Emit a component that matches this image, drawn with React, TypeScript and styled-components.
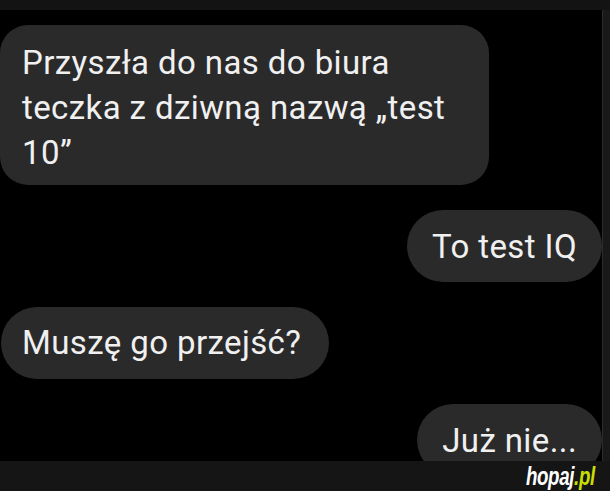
import styled, {createGlobalStyle} from "styled-components";

const GlobalStyle = createGlobalStyle`
  html, body {
    margin: 0;
    padding: 0;
    background: #000;
  }
  body {
    font-family: Roboto, "Liberation Sans", Arial, sans-serif;
  }
`;

const Screen = styled.div`
  width: 610px;
  height: 491px;
  display: flex;
  flex-direction: column;
  background: #000;
  overflow: hidden;
`;

const Chat = styled.div`
  height: 461px;
  display: flex;
  box-sizing: border-box;
  border-top: 10px solid #131313;
  overflow: hidden;
`;

const Messages = styled.div`
  flex: 1;
  display: flex;
  flex-direction: column;
  gap: 25px;
  padding: 15px 0 0 0;
`;

const RightEdge = styled.div`
  width: 7px;
  background: #191919;
  border-left: 1px solid #2c2c2c;
`;

const Bubble = styled.div<{$side: "left" | "right"; $wide?: boolean}>`
  align-self: ${(p) => (p.$side === "left" ? "flex-start" : "flex-end")};
  box-sizing: border-box;
  background: #2a2a2a;
  color: #f0f0f0;
  font-size: 33px;
  line-height: 45px;
  letter-spacing: 0.4px;
  white-space: ${(p) => (p.$wide ? "normal" : "nowrap")};
  width: ${(p) => (p.$wide ? "489px" : "auto")};
  padding: ${(p) => (p.$wide ? "15px 24px 10px 22px" : p.$side === "left" ? "13px 28px 14px 21px" : "14px 25px 13px 25px")};
  border-radius: ${(p) => (p.$wide ? "28px" : "36px")};
  margin-left: ${(p) => (p.$side === "left" && !p.$wide ? "1px" : "0")};
`;

const Footer = styled.div`
  height: 30px;
  display: flex;
  align-items: center;
  justify-content: flex-end;
  padding-right: 15px;
  background: #151515;
`;

const Logo = styled.div`
  font-family: "Liberation Sans", Arial, sans-serif;
  font-weight: 700;
  font-style: italic;
  font-size: 25px;
  line-height: 30px;
  letter-spacing: -0.5px;
  color: #fff;
  transform: scaleX(0.75);
  transform-origin: right center;
  span {
    color: #c9df00;
  }
`;

export default function App() {
  return (
    <>
      <GlobalStyle />
      <Screen>
        <Chat>
          <Messages>
            <Bubble $side="left" $wide>
              Przyszła do nas do biura teczka z dziwną nazwą „test 10”
            </Bubble>
            <Bubble $side="right">To test IQ</Bubble>
            <Bubble $side="left">Muszę go przejść?</Bubble>
            <Bubble $side="right">Już nie...</Bubble>
          </Messages>
          <RightEdge />
        </Chat>
        <Footer>
          <Logo>
            hopaj<span>.pl</span>
          </Logo>
        </Footer>
      </Screen>
    </>
  );
}
